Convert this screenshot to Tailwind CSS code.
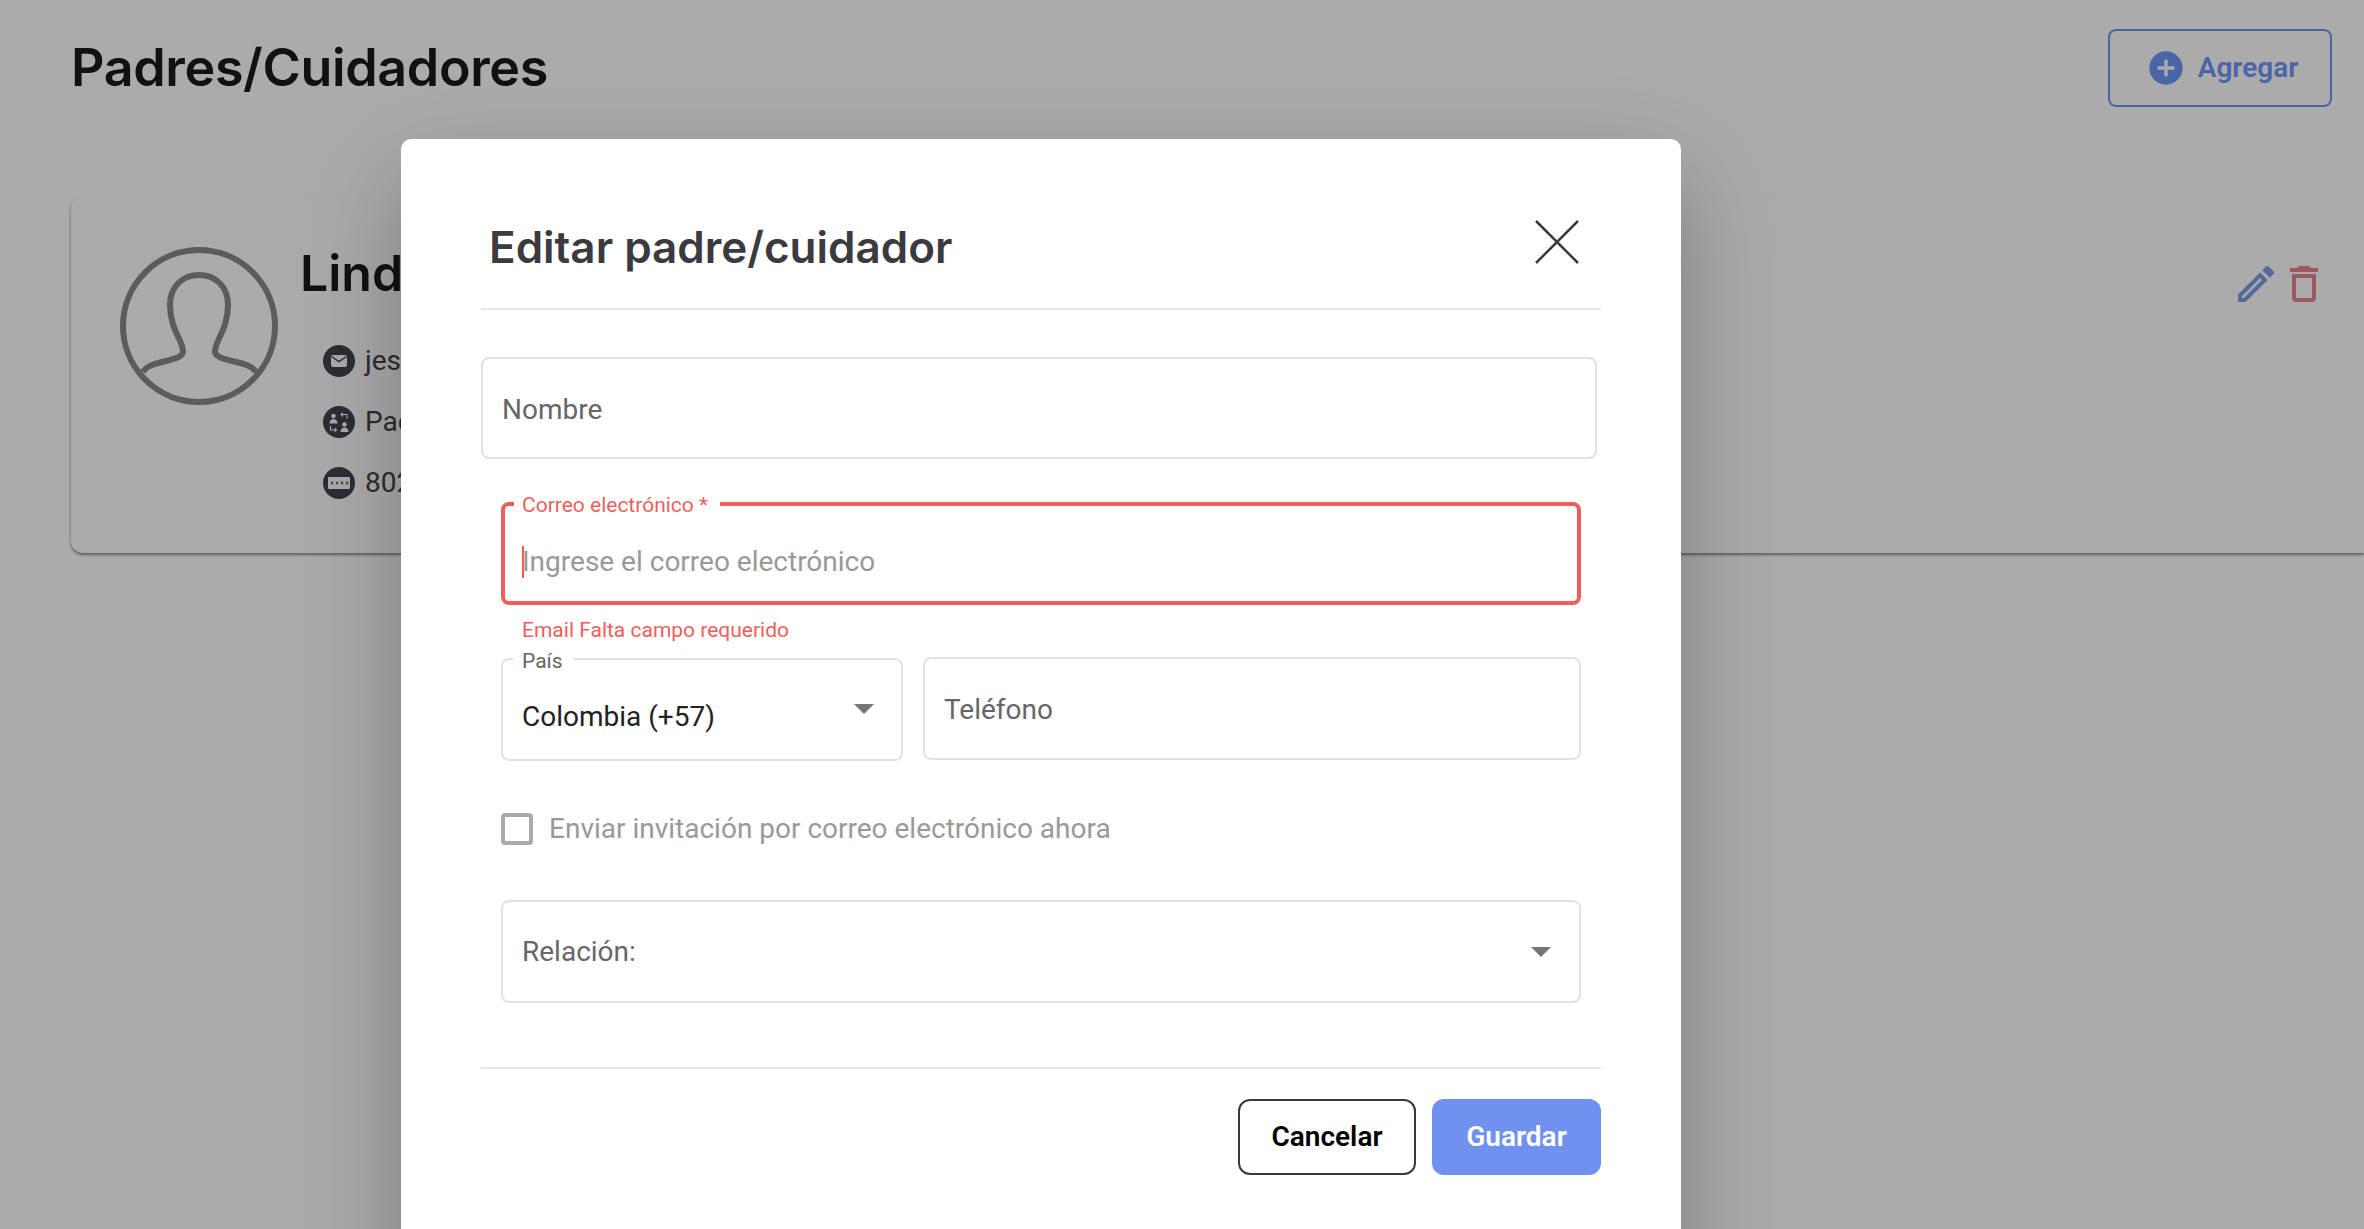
<!DOCTYPE html>
<html lang="es">
<head>
  <meta charset="UTF-8">
  <title>Padres/Cuidadores</title>
  <script src="https://cdn.jsdelivr.net/npm/@tailwindcss/browser@4"></script>
</head>
<body class="font-['Roboto',sans-serif] bg-white">
  <div class="relative h-[1229px] w-[2364px] overflow-hidden">
    <!-- page behind the dialog -->
    <main class="pl-[71px] pt-[29px]">
      <header class="flex items-center justify-between pr-[32px]">
        <h1 class="font-['Inter',sans-serif] font-semibold text-[52px] leading-[78px] text-[#1a1a1a] tracking-[-0.35px]">Padres/Cuidadores</h1>
        <button class="flex items-center justify-center w-[224px] h-[78px] pl-[4px] border-2 border-[#6f98fd] rounded-lg text-[#6f98fd] text-[28px] font-semibold gap-[12px]">
          <svg class="w-[40px] h-[40px] fill-current" viewBox="0 0 24 24"><path d="M12 2C6.48 2 2 6.48 2 12s4.48 10 10 10 10-4.48 10-10S17.52 2 12 2zm5 11h-4v4h-2v-4H7v-2h4V7h2v4h4v2z"/></svg>
          Agregar
        </button>
      </header>
      <section class="mt-[90px] flex h-[356px] rounded-l-xl bg-white shadow-[0_2px_3px_rgba(0,0,0,0.45)] pr-[36px]">
        <svg class="ml-[49px] mt-[50px] w-[158px] h-[158px] fill-none stroke-[#8a8a8a] stroke-[6px]" viewBox="0 0 158 158">
          <circle cx="79" cy="79" r="76"/>
          <path d="M23 125C30 112 63 116 63 104C63 94 50 82 50 58C50 40 62 28 79 28C96 28 108 40 108 58C108 82 95 94 95 104C95 116 128 112 136 125"/>
        </svg>
        <div class="ml-[22px] mt-[46px]">
          <h2 class="font-['Inter',sans-serif] font-semibold text-[50px] leading-[60px] text-[#1a1a1a]">Linda</h2>
          <ul class="ml-[23px] mt-[42px] flex flex-col gap-[29px] text-[28px] leading-[32px] text-[#444]">
            <li class="flex items-center gap-[10px]">
              <svg class="w-[32px] h-[32px]" viewBox="0 0 32 32"><circle cx="16" cy="16" r="16" fill="#44444c"/><rect x="8" y="10" width="16" height="12" rx="2" fill="#fff"/><path d="M8.500 11.500L16 16.500L23.500 11.500" fill="none" stroke="#44444c" stroke-width="1.500"/></svg>
              jes
            </li>
            <li class="flex items-center gap-[10px]">
              <svg class="w-[32px] h-[32px]" viewBox="0 0 32 32"><circle cx="16" cy="16" r="16" fill="#44444c"/><circle cx="10.500" cy="10" r="2.300" fill="#fff"/><path d="M6.500 17.500c0-3 2-4.500 4-4.500s4 1.500 4 4.500z" fill="#fff"/><circle cx="21.500" cy="18.500" r="2.300" fill="#fff"/><path d="M17.500 26c0-3 2-4.500 4-4.500s4 1.500 4 4.500z" fill="#fff"/><path d="M24 12.500V8.500h-6m2-1.800l-2 1.800 2 1.800M7.500 20v4h6m-2-1.800l2 1.800-2 1.800" fill="none" stroke="#fff" stroke-width="1.100"/></svg>
              Padre
            </li>
            <li class="flex items-center gap-[10px]">
              <svg class="w-[32px] h-[32px]" viewBox="0 0 32 32"><circle cx="16" cy="16" r="16" fill="#44444c"/><rect x="5" y="10" width="22" height="12" rx="1" fill="#fff"/><path d="M8 14.500l2 3m0-3l-2 3M13 14.500l2 3m0-3l-2 3M18 14.500l2 3m0-3l-2 3M23 14.500l2 3m0-3l-2 3" stroke="#44444c" stroke-width="0.900"/></svg>
              802
            </li>
          </ul>
        </div>
        <div class="ml-auto mt-[63px] flex h-[48px]">
          <svg class="w-[48px] h-[48px] fill-[#7f9ee0]" viewBox="0 0 24 24"><path d="M14.060 9.020l.92.92L5.920 19H5v-.92l9.060-9.060M17.660 3c-.25 0-.51.1-.7.29l-1.830 1.830 3.750 3.750 1.830-1.830c.39-.39.39-1.020 0-1.410l-2.340-2.340c-.2-.2-.45-.29-.71-.29zm-3.600 3.190L3 17.250V21h3.750L17.810 9.940l-3.750-3.750z"/></svg>
          <svg class="w-[48px] h-[48px] fill-[#e6868f]" viewBox="0 0 24 24"><path d="M6 19c0 1.100.9 2 2 2h8c1.100 0 2-.9 2-2V7H6v12zM8 9h8v10H8V9zm7.500-5l-1-1h-5l-1 1H5v2h14V4z"/></svg>
        </div>
      </section>
    </main>

    <!-- backdrop -->
    <div class="absolute inset-0 bg-black/33"></div>

    <!-- dialog -->
    <div class="absolute left-[401px] top-[139px] w-[1280px] h-[1200px] bg-white rounded-[10px] px-[80px] shadow-[0_40px_100px_rgba(0,0,0,0.28)]">
      <div class="flex justify-between h-[171px] border-b-2 border-[#e6e6e6] pl-[8px] pr-[22px]">
        <h3 class="mt-[78px] font-['Inter',sans-serif] font-semibold text-[44px] leading-[60px] h-[60px] text-[#3a3a40]">Editar padre/cuidador</h3>
        <svg class="mt-[81px] w-[44px] h-[44px] stroke-[#3a3a40] stroke-[2.500px]" viewBox="0 0 44 44"><path d="M1 1L43 43M43 1L1 43"/></svg>
      </div>

      <div class="mt-[47px] flex items-center w-[1116px] h-[102px] border-2 border-[#e2e2e2] rounded-lg px-[19px] pt-[3px] text-[28px] text-[#666]">Nombre</div>

      <div class="pl-[20px] w-[1100px]">
        <fieldset class="mt-[34px] h-[112px] border-4 border-[#ee5f5b] rounded-lg px-[9px]">
          <legend class="relative top-[2px] pl-[8px] pr-[12px] text-[21px] leading-[21px] text-[#ee5f5b]">Correo electrónico *</legend>
          <div class="flex items-center h-[32px] mt-[32px] pl-[8px] text-[28px] text-[#999]">
            <span class="w-0 h-[32px] border-l-2 border-[#ee5f5b]"></span>
            <span class="-ml-[2px]">Ingrese el correo electrónico</span>
          </div>
        </fieldset>
        <p class="mt-[13px] pl-[21px] text-[21px] leading-[24px] text-[#ee5f5b]">Email Falta campo requerido</p>

        <div class="mt-[6px] flex gap-[20px]">
          <fieldset class="w-[402px] h-[113px] border-2 border-[#e2e2e2] rounded-lg px-[10px]">
            <legend class="relative top-[3px] pl-[9px] pr-[10px] text-[21px] leading-[21px] text-[#666]">País</legend>
            <div class="flex items-center justify-between h-[32px] mt-[32px] pl-[9px] pr-[17px] text-[28px] text-[#222]">
              Colombia (+57)
              <svg class="w-[20px] h-[10px] -mt-[16px] fill-[#757575]" viewBox="0 0 20 10"><path d="M0 0h20L10 10z"/></svg>
            </div>
          </fieldset>
          <div class="flex items-center mt-[9px] w-[658px] h-[103px] border-2 border-[#e2e2e2] rounded-lg px-[19px] pt-[2px] text-[28px] text-[#666]">Teléfono</div>
        </div>

        <label class="mt-[46px] flex items-center gap-[16px] text-[28px] text-[#999]">
          <span class="w-[32px] h-[32px] border-4 border-[#aaa] rounded-[4px]"></span>
          <span class="pt-[1px]">Enviar invitación por correo electrónico ahora</span>
        </label>

        <div class="mt-[50px] flex items-center justify-between h-[103px] border-2 border-[#e2e2e2] rounded-lg pl-[19px] pr-[28px] text-[28px] text-[#666]">
          Relación:
          <svg class="w-[20px] h-[10px] fill-[#757575]" viewBox="0 0 20 10"><path d="M0 0h20L10 10z"/></svg>
        </div>
      </div>

      <div class="mt-[64px] border-t-2 border-[#e6e6e6] pt-[30px] flex justify-end gap-[16px] text-[28px] font-semibold">
        <button class="w-[178px] h-[76px] border-2 border-[#3a3a40] rounded-xl text-black">Cancelar</button>
        <button class="w-[169px] h-[76px] rounded-xl bg-[#7092ee] text-white">Guardar</button>
      </div>
    </div>
  </div>
</body>
</html>
